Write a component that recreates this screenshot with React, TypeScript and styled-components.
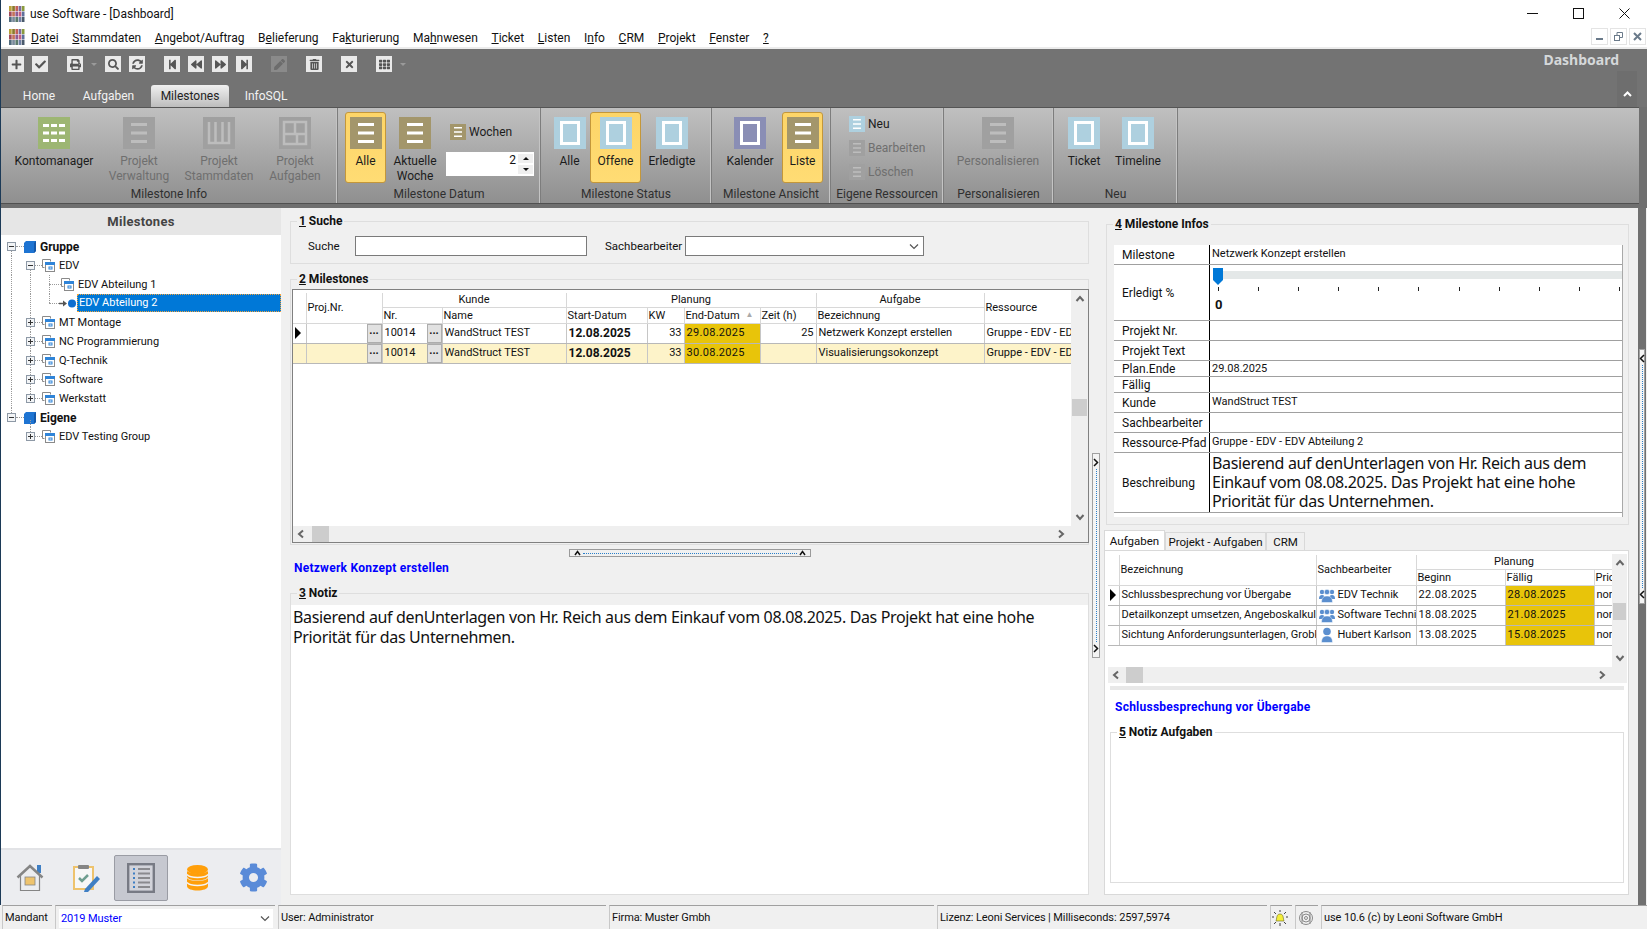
import React from 'react';
import styled, { createGlobalStyle } from 'styled-components';
import {
  FaBackward,
  FaCheck,
  FaCog,
  FaForward,
  FaPen,
  FaPlus,
  FaPrint,
  FaSearch,
  FaStepBackward,
  FaStepForward,
  FaSyncAlt,
  FaTh,
  FaTimes,
  FaTrashAlt,
} from 'react-icons/fa';

const GlobalStyle = createGlobalStyle`
  html, body {
    margin: 0;
    padding: 0;
    background: #f0f0f0;
    font-family: Roboto, "Noto Sans", sans-serif;
    font-size: 12px;
    color: #111;
    overflow: hidden;
  }
  * { box-sizing: border-box; }
`;

/* ---------- window frame ---------- */

const Page = styled.div`
  width: 1647px;
  height: 929px;
  display: flex;
  flex-direction: column;
  background: #f0f0f0;
`;

const Framed = styled.div`
  flex: 0 0 905px;
  display: flex;
  flex-direction: column;
  border-left: 1px solid #1c3a57;
`;

const TitleBar = styled.div`
  height: 26px;
  flex: none;
  display: flex;
  align-items: center;
  background: #fff;
  padding: 1px 0 0 8px;
`;

const AppLogo = styled.svg`
  width: 16px;
  height: 16px;
  margin-right: 5px;
  flex: none;
`;

const WindowButtons = styled.div`
  margin-left: auto;
  display: flex;
  gap: 35px;
  padding-right: 17px;
  align-items: center;
`;

const MenuBar = styled.div`
  height: 23px;
  flex: none;
  display: flex;
  align-items: center;
  background: #fff;
  padding-left: 8px;
  border-bottom: 2px solid #ececec;
`;

const MenuItem = styled.span`
  margin-right: 13.7px;
  padding-top: 3px;
  white-space: nowrap;
`;

const MdiButtons = styled.div`
  margin-left: auto;
  display: flex;
  gap: 2px;
  padding-right: 1px;
`;

const MdiButton = styled.div`
  width: 17px;
  height: 17px;
  border: 1px solid #e4e4e4;
  display: flex;
  align-items: center;
  justify-content: center;
`;

/* ---------- ribbon ---------- */

const RibbonHead = styled.div`
  height: 58px;
  flex: none;
  background: #737373;
  display: flex;
  flex-direction: column;
  position: relative;
`;

const Toolbar = styled.div`
  height: 30px;
  display: flex;
  align-items: center;
  gap: 19px;
  padding: 0 0 0 7px;
`;

const ToolGroup = styled.div`
  display: flex;
  align-items: center;
  gap: 8px;
`;

const ToolTile = styled.div<{ $off?: boolean }>`
  width: 16px;
  height: 16px;
  display: flex;
  align-items: center;
  justify-content: center;
  font-size: 11px;
  background: ${(p) => (p.$off ? '#8a8a8a' : '#e9e9e9')};
  color: ${(p) => (p.$off ? '#6c6c6c' : '#555')};
`;

const ToolCaret = styled.span`
  width: 0;
  height: 0;
  border-left: 3px solid transparent;
  border-right: 3px solid transparent;
  border-top: 3px solid #9a9a9a;
`;

const DashboardTitle = styled.div`
  position: absolute;
  right: 28px;
  top: 1px;
  font-family: "Noto Sans", sans-serif;
  font-size: 14px;
  font-weight: 700;
  color: #d5d8da;
`;

const CollapseTab = styled.div`
  position: absolute;
  right: 10px;
  bottom: 0;
  width: 20px;
  height: 36px;
  background: #6e6e6e;
  color: #fff;
  display: flex;
  align-items: center;
  justify-content: center;
  padding-top: 9px;
`;

const TabRow = styled.div`
  flex: 1;
  display: flex;
  align-items: flex-end;
  padding-left: 11px;
`;

const RibbonTab = styled.div<{ $active?: boolean; $w: number }>`
  width: ${(p) => p.$w}px;
  height: 22px;
  display: flex;
  align-items: center;
  justify-content: center;
  border-radius: 3px 3px 0 0;
  color: ${(p) => (p.$active ? '#222' : '#f2f2f2')};
  background: ${(p) => (p.$active ? 'linear-gradient(#f0f0f0, #bdbdbd)' : 'transparent')};
`;

const RibbonWrap = styled.div`
  flex: none;
  height: 101px;
  background: #6f6f6f;
  padding: 0 8px 4px 0;
`;

const Ribbon = styled.div`
  height: 97px;
  display: flex;
  background: linear-gradient(#c0c0c0, #8f8f8f);
  border-top: 1px solid #555;
  border-bottom: 1px solid #505050;
`;

const RibbonGroup = styled.div<{ $w: number }>`
  width: ${(p) => p.$w}px;
  flex: none;
  display: flex;
  flex-direction: column;
  border-right: 1px solid #7d7d7d;
  box-shadow: inset -1px 0 0 #c4c4c4;
`;

const GroupItems = styled.div<{ $pad: number; $gap?: number }>`
  height: 78px;
  display: flex;
  align-items: flex-start;
  padding: 4px 0 0 ${(p) => p.$pad}px;
  gap: ${(p) => p.$gap || 0}px;
`;

const GroupLabel = styled.div`
  flex: 1;
  display: flex;
  align-items: center;
  justify-content: center;
  color: #2f2f2f;
  padding-bottom: 1px;
  white-space: nowrap;
`;

const RibbonButton = styled.div<{ $w: number; $on?: boolean; $off?: boolean }>`
  width: ${(p) => p.$w}px;
  height: 71px;
  flex: none;
  display: flex;
  flex-direction: column;
  align-items: center;
  padding-top: 4px;
  border-radius: 3px;
  text-align: center;
  line-height: 15px;
  color: ${(p) => (p.$off ? '#6f6f6f' : '#1c1c1c')};
  border: 1px solid ${(p) => (p.$on ? '#c4973a' : 'transparent')};
  background: ${(p) => (p.$on ? 'linear-gradient(#fdd568, #ffdc74)' : 'transparent')};
`;

const ButtonText = styled.span`
  margin-top: 5px;
  white-space: nowrap;
`;

const WeekColumn = styled.div`
  display: flex;
  flex-direction: column;
  margin-left: 2px;
  padding-top: 12px;
`;

const SmallAction = styled.div<{ $off?: boolean }>`
  height: 16px;
  display: flex;
  align-items: center;
  gap: 3px;
  color: ${(p) => (p.$off ? '#6f6f6f' : '#1c1c1c')};
`;

const WeekAction = styled(SmallAction)`
  margin-left: 4px;
`;

const ActionStack = styled.div`
  display: flex;
  flex-direction: column;
  gap: 8px;
  padding-top: 4px;
`;

const Spinner = styled.div`
  width: 88px;
  height: 24px;
  margin-top: 12px;
  background: #fff;
  display: flex;
  justify-content: flex-end;
`;

const SpinValue = styled.span`
  line-height: 16px;
  margin-right: 2px;
`;

const SpinArrows = styled.div`
  width: 15px;
  display: flex;
  flex-direction: column;
  gap: 2px;
  padding: 2px 0;
  margin-right: 1px;
`;

const SpinArrow = styled.div<{ $down?: boolean }>`
  flex: 1;
  background: #efefef;
  display: flex;
  align-items: center;
  justify-content: center;
  &::after {
    content: '';
    border-left: 3px solid transparent;
    border-right: 3px solid transparent;
    ${(p) => (p.$down ? 'border-top: 3px solid #111;' : 'border-bottom: 3px solid #111;')}
  }
`;

const IconSvg = styled.svg<{ $size: number }>`
  width: ${(p) => p.$size}px;
  height: ${(p) => p.$size}px;
  flex: none;
  display: block;
`;

type Glyph = 'list' | 'frame' | 'grid' | 'columns' | 'tiles';

const RibbonIcon = ({ kind, color, ink = '#fff', size = 32 }: { kind: Glyph; color: string; ink?: string; size?: number }) => (
  <IconSvg $size={size} viewBox="0 0 32 32">
    <rect width="32" height="32" fill={color} />
    {kind === 'list' && (
      <g fill={ink}>
        <rect x="8" y="6" width="16" height="3" />
        <rect x="8" y="14.5" width="16" height="3" />
        <rect x="8" y="23" width="16" height="3" />
      </g>
    )}
    {kind === 'frame' && <rect x="7.5" y="5.5" width="17" height="21" fill="none" stroke={ink} strokeWidth="3" />}
    {kind === 'grid' && (
      <g fill={ink}>
        {[7, 14.5, 22].map((y) => [5, 13, 21].map((x) => <rect key={`${x}-${y}`} x={x} y={y} width="6" height="3" />))}
      </g>
    )}
    {kind === 'columns' && (
      <g fill="none" stroke={ink} strokeWidth="2.5">
        <path d="M6 5v21h20V5M12.5 5v21M19.5 5v21" />
      </g>
    )}
    {kind === 'tiles' && (
      <g fill="none" stroke={ink} strokeWidth="2.5">
        <rect x="5" y="5" width="22" height="22" />
        <path d="M5 17h22M16 5v12M18 17v10" />
      </g>
    )}
  </IconSvg>
);

const OFF = '#a0a0a0';
const OFF_INK = '#bdbdbd';
const TAN = '#a3966b';
const SKY = '#aed0df';

/* ---------- main area ---------- */

const Main = styled.div`
  flex: 1;
  display: flex;
  min-height: 0;
`;

const LeftPanel = styled.div`
  width: 280px;
  flex: none;
  display: flex;
  flex-direction: column;
  background: #fff;
`;

const PanelHeader = styled.div`
  height: 27px;
  flex: none;
  background: #e6e6e6;
  display: flex;
  align-items: center;
  justify-content: center;
  font-size: 13px;
  font-weight: 700;
  letter-spacing: 0.3px;
  color: #444;
`;

const Tree = styled.div`
  flex: 1;
  padding-top: 2px;
`;

const TreeRowBox = styled.div<{ $pad: number }>`
  height: 19px;
  position: relative;
  display: flex;
  align-items: center;
  padding-left: ${(p) => p.$pad}px;
  font-size: 11px;
`;

const Guide = styled.span<{ $x: number; $from: number; $to: number }>`
  position: absolute;
  left: ${(p) => p.$x}px;
  top: ${(p) => p.$from}px;
  bottom: ${(p) => 19 - p.$to}px;
  border-left: 1px dotted #9a9a9a;
`;

const Elbow = styled.span<{ $x: number; $w: number }>`
  position: absolute;
  left: ${(p) => p.$x}px;
  width: ${(p) => p.$w}px;
  top: 9px;
  border-top: 1px dotted #9a9a9a;
`;

const Expander = styled.span<{ $x: number }>`
  position: absolute;
  left: ${(p) => p.$x}px;
  top: 5px;
  width: 9px;
  height: 9px;
  border: 1px solid #8e99a6;
  background: #f2f4f6;
  z-index: 1;
  &::before {
    content: '';
    position: absolute;
    left: 1px;
    right: 1px;
    top: 3px;
    height: 1px;
    background: #333;
  }
`;

const ExpanderPlus = styled(Expander)`
  &::after {
    content: '';
    position: absolute;
    top: 1px;
    bottom: 1px;
    left: 3px;
    width: 1px;
    background: #333;
  }
`;

const TreeText = styled.span<{ $bold?: boolean }>`
  margin-left: 4px;
  white-space: nowrap;
  font-weight: ${(p) => (p.$bold ? 700 : 400)};
  font-size: ${(p) => (p.$bold ? 12 : 11)}px;
`;

const SelectedText = styled.span`
  position: absolute;
  left: 76px;
  right: 0;
  top: 0;
  height: 18px;
  background: #0078d7;
  color: #fff;
  outline: 1px dotted #f2a33c;
  outline-offset: -1px;
  padding-left: 2px;
  line-height: 18px;
`;

const Bullet = styled.svg`
  position: absolute;
  left: 58px;
  top: 4px;
  width: 18px;
  height: 11px;
`;

const NavBar = styled.div`
  height: 57px;
  flex: none;
  display: flex;
  align-items: center;
  background: #ecedf0;
  border-top: 2px solid #e2e3e6;
`;

const NavSlot = styled.div<{ $w: number; $on?: boolean }>`
  width: ${(p) => p.$w}px;
  height: 46px;
  flex: none;
  display: flex;
  align-items: center;
  justify-content: center;
  border-radius: 2px;
  color: #5a8bd8;
  font-size: 29px;
  background: ${(p) => (p.$on ? '#c6c8d0' : 'transparent')};
  border: 1px solid ${(p) => (p.$on ? '#9a9ca4' : 'transparent')};
`;

const CenterColumn = styled.div`
  width: 811px;
  flex: none;
  display: flex;
  flex-direction: column;
  padding: 6px 3px 10px 9px;
`;

const GroupBox = styled.fieldset<{ $h?: number; $top?: number }>`
  margin: ${(p) => p.$top || 0}px 0 0;
  padding: 0;
  min-width: 0;
  border: 1px solid #dedede;
  display: flex;
  flex-direction: column;
  ${(p) => (p.$h ? `height: ${p.$h}px; flex: none;` : 'flex: 1;')}
`;

const Legend = styled.legend`
  margin-left: 6px;
  padding: 0 2px;
  font-weight: 700;
  line-height: 14px;
`;

const InfoLegend = styled(Legend)`
  margin-left: -1px;
`;

const SearchRow = styled.div`
  display: flex;
  align-items: center;
  padding: 8px 0 0 17px;
  font-size: 11.5px;
`;

const FieldBox = styled.div<{ $w: number }>`
  width: ${(p) => p.$w}px;
  height: 20px;
  background: #fff;
  border: 1px solid #7a7a7a;
  display: flex;
  align-items: center;
  justify-content: flex-end;
  padding-right: 4px;
`;

const SearchLabel = styled.span<{ $w: number }>`
  width: ${(p) => p.$w}px;
  flex: none;
`;

const GridBox = styled.div`
  margin: 3px 0 0 1px;
  width: 797px;
  height: 254px;
  border: 1px solid #808080;
  display: flex;
  flex-direction: column;
`;

const GridTop = styled.div`
  flex: 1;
  display: flex;
  min-height: 0;
`;

const GridBody = styled.div`
  flex: 1;
  background: #fff;
  min-width: 0;
  overflow: hidden;
  padding-top: 3px;
`;

const Table = styled.table<{ $w: number }>`
  width: ${(p) => p.$w}px;
  table-layout: fixed;
  border-collapse: collapse;
  font-size: 11px;
`;

const HeadRow = styled.tr<{ $h: number }>`
  height: ${(p) => p.$h}px;
`;

const HeadCell = styled.td<{ $center?: boolean }>`
  position: relative;
  padding: 0 1px;
  background: #fff;
  border-right: 1px solid #d8d8d8;
  border-bottom: 1px solid #d8d8d8;
  text-align: ${(p) => (p.$center ? 'center' : 'left')};
  white-space: nowrap;
  overflow: hidden;
  line-height: 13px;
`;

const Row = styled.tr<{ $hot?: boolean }>`
  height: 20px;
  background: ${(p) => (p.$hot ? '#fdf3c9' : '#fff')};
`;

const Cell = styled.td<{ $right?: boolean; $bold?: boolean; $due?: boolean; $button?: boolean; $date?: boolean }>`
  padding: 0 ${(p) => (p.$button ? 0 : 2)}px;
  border-right: 1px solid #c6c6c6;
  border-bottom: 1px solid #b8b8b8;
  white-space: nowrap;
  overflow: hidden;
  line-height: 18px;
  text-align: ${(p) => (p.$right ? 'right' : 'left')};
  font-weight: ${(p) => (p.$bold ? 700 : 400)};
  font-size: ${(p) => (p.$bold ? 12 : 11)}px;
  letter-spacing: ${(p) => (p.$date ? 0.3 : 0)}px;
  background: ${(p) => (p.$due ? '#e8c40a' : 'transparent')};
`;

const CellInner = styled.div`
  display: flex;
  align-items: center;
  justify-content: space-between;
  padding-left: 2px;
`;

const Dots = styled.span`
  width: 15px;
  height: 19px;
  flex: none;
  background: #e1e1e1;
  border: 1px solid #adadad;
  font-weight: 700;
  line-height: 11px;
  text-align: center;
`;

const RowMark = styled.span`
  display: block;
  margin-left: 2px;
  width: 0;
  height: 0;
  border-top: 6px solid transparent;
  border-bottom: 6px solid transparent;
  border-left: 6px solid #000;
`;

const SortMark = styled.span`
  position: absolute;
  right: 6px;
  top: 0;
  font-size: 8px;
  color: #aaa;
`;

const VScroll = styled.div<{ $w: number; $thumbTop: number; $thumbH: number }>`
  width: ${(p) => p.$w}px;
  flex: none;
  display: flex;
  flex-direction: column;
  align-items: center;
  background: #efefef;
  padding: 4px 0;
  position: relative;
  &::after {
    content: '';
    position: absolute;
    left: 1px;
    right: 1px;
    top: ${(p) => p.$thumbTop}px;
    height: ${(p) => p.$thumbH}px;
    background: #cdcdcd;
  }
`;

const ScrollGap = styled.div`
  flex: 1;
`;

const HScroll = styled.div<{ $pad: number }>`
  height: 16px;
  flex: none;
  display: flex;
  align-items: center;
  background: #efefef;
  padding: 0 ${(p) => p.$pad}px 0 3px;
`;

const HThumb = styled.div<{ $left: number }>`
  width: 17px;
  height: 16px;
  margin-left: ${(p) => p.$left}px;
  background: #cdcdcd;
`;

const Arrow = styled.svg`
  width: 10px;
  height: 10px;
  flex: none;
  fill: none;
  stroke: #666;
  stroke-width: 2;
`;

const ChevUp = () => <Arrow viewBox="0 0 10 10"><path d="M1.5 7 5 3l3.5 4" /></Arrow>;
const ChevDown = () => <Arrow viewBox="0 0 10 10"><path d="M1.5 3 5 7l3.5-4" /></Arrow>;
const ChevLeft = () => <Arrow viewBox="0 0 10 10"><path d="M7 1.5 3 5l4 3.5" /></Arrow>;
const ChevRight = () => <Arrow viewBox="0 0 10 10"><path d="M3 1.5 7 5 3 8.5" /></Arrow>;

const GridSplitter = styled.div`
  align-self: center;
  width: 242px;
  height: 8px;
  margin-top: 4px;
  border: 1px solid #9a9a9a;
  display: flex;
  align-items: center;
  justify-content: space-between;
  padding: 0 4px;
  font-size: 0;
`;

const SplitterDots = styled.span`
  flex: 1;
  margin: 0 2px;
  border-top: 1px dotted #2a7fc9;
`;

const TinyCaret = styled.svg`
  width: 7px;
  height: 6px;
  flex: none;
  fill: none;
  stroke: #111;
  stroke-width: 1.5;
`;

const TinyCaretSide = styled(TinyCaret)`
  width: 6px;
  height: 9px;
`;

const Link = styled.div<{ $pad: number; $h: number }>`
  height: ${(p) => p.$h}px;
  flex: none;
  display: flex;
  align-items: center;
  padding-left: ${(p) => p.$pad}px;
  color: #0000ff;
  font-weight: 700;
  letter-spacing: 0.25px;
`;

const NoteText = styled.div`
  flex: 1;
  margin-top: 5px;
  background: #fff;
  padding: 3px 2px;
  font-family: "Noto Sans", sans-serif;
  font-size: 16px;
  line-height: 19.5px;
  letter-spacing: -0.35px;
`;

const VerticalSplitter = styled.div<{ $top: number; $h: number; $w: number }>`
  width: ${(p) => p.$w}px;
  height: ${(p) => p.$h}px;
  margin-top: ${(p) => p.$top}px;
  flex: none;
  background: #f4f4f4;
  border: 1px solid #a0a0a0;
  display: flex;
  flex-direction: column;
  align-items: center;
  justify-content: space-between;
  padding: 4px 0;
`;

const VDots = styled.span`
  flex: 1;
  margin: 2px 0;
  border-left: 1px dotted #2a7fc9;
`;

const SideStrip = styled.div`
  width: 8px;
  flex: none;
  background: #707070;
  display: flex;
  justify-content: center;
  align-items: flex-start;
`;

const RightColumn = styled.div`
  width: 538px;
  flex: none;
  display: flex;
  flex-direction: column;
  padding: 9px 9px 10px 4px;
`;

const InfoBox = styled(GroupBox)`
  margin-left: 2px;
  padding: 14px 5px 0 7px;
`;

const InfoTable = styled.div`
  background: #fff;
  padding-bottom: 4px;
  border-right: 1px solid #a8a8a8;
`;

const InfoRow = styled.div<{ $h: number }>`
  height: ${(p) => p.$h}px;
  display: flex;
  border-bottom: 1px solid #a0a0a0;
`;

const InfoLabel = styled.div`
  width: 96px;
  flex: none;
  padding: 0 0 0 8px;
  display: flex;
  align-items: center;
  border-right: 1px solid #000;
`;

const InfoValue = styled.div<{ $top?: boolean }>`
  flex: 1;
  display: flex;
  padding: ${(p) => (p.$top ? 2 : 0)}px 2px 0;
  align-items: ${(p) => (p.$top ? 'flex-start' : 'center')};
  font-size: 11px;
  min-width: 0;
`;

const BigValue = styled(InfoValue)`
  font-family: "Noto Sans", sans-serif;
  font-size: 16px;
  line-height: 19px;
  letter-spacing: -0.35px;
  padding-top: 1px;
`;

const SliderBox = styled.div`
  flex: 1;
  padding: 6px 0 0 3px;
  display: flex;
  flex-direction: column;
`;

const SliderTrack = styled.div`
  height: 8px;
  background: #e4e8e8;
  position: relative;
`;

const SliderThumb = styled.svg`
  position: absolute;
  left: 0;
  top: -3px;
  width: 10px;
  height: 17px;
`;

const Ticks = styled.div`
  display: flex;
  justify-content: space-between;
  padding: 0 2px 0 5px;
  margin-top: 8px;
`;

const Tick = styled.span`
  width: 1px;
  height: 4px;
  background: #222;
`;

const SliderValue = styled.div`
  font-size: 13px;
  font-weight: 700;
  line-height: 16px;
  margin: 6px 0 0 2px;
`;

const TabStrip = styled.div`
  margin-top: 5px;
  display: flex;
  align-items: flex-end;
  height: 20px;
  flex: none;
`;

const PageTab = styled.div<{ $w: number; $active?: boolean }>`
  width: ${(p) => p.$w}px;
  height: ${(p) => (p.$active ? 20 : 18)}px;
  display: flex;
  align-items: center;
  justify-content: center;
  white-space: nowrap;
  font-size: 11.5px;
  background: ${(p) => (p.$active ? '#fff' : '#f0f0f0')};
  border: 1px solid #d9d9d9;
  border-bottom: 0;
`;

const TabPage = styled.div`
  flex: 1;
  background: #fff;
  border: 1px solid #d9d9d9;
  display: flex;
  flex-direction: column;
  padding: 3px 1px 5px 3px;
  min-height: 0;
`;

const TaskTop = styled.div`
  height: 113px;
  flex: none;
  display: flex;
`;

const TaskBody = styled.div`
  flex: 1;
  overflow: hidden;
  min-width: 0;
  padding-top: 1px;
`;

const PaleBar = styled.div`
  height: 4px;
  margin: 3px 3px 0 2px;
  background: #e8e8e8;
  flex: none;
`;

const NoteBox = styled(GroupBox)`
  margin: 1px 3px 6px 2px;
`;

const WhoCell = styled.span`
  display: flex;
  align-items: center;
  gap: 3px;
  svg {
    flex: none;
  }
`;

/* ---------- status bar ---------- */

const StatusBar = styled.div`
  flex: 1;
  display: flex;
  gap: 3px;
  padding-left: 2px;
  font-size: 11px;
  letter-spacing: -0.1px;
`;

const StatusCell = styled.div<{ $w?: number }>`
  ${(p) => (p.$w ? `width: ${p.$w}px; flex: none;` : 'flex: 1;')}
  display: flex;
  align-items: center;
  padding-left: 2px;
  border-top: 1px solid #a0a0a0;
  border-left: 1px solid #c8c8c8;
  white-space: nowrap;
  overflow: hidden;
`;

const StatusGlyph = styled(StatusCell)`
  padding-left: 0;
`;

const MandantCombo = styled.div`
  flex: 1;
  height: 19px;
  margin: 1px 2px 0 1px;
  background: #fff;
  display: flex;
  align-items: center;
  justify-content: space-between;
  padding: 0 3px 0 2px;
  color: #0000ff;
`;

const Combo = () => (
  <svg width="10" height="7" viewBox="0 0 10 7" fill="none" stroke="#555" strokeWidth="1.2">
    <path d="M1 1.5 5 5.5l4-4" />
  </svg>
);

const TinyUp = () => <TinyCaret viewBox="0 0 7 6"><path d="M1 5 3.5 1.5 6 5" /></TinyCaret>;
const TinyLeft = () => <TinyCaretSide viewBox="0 0 6 9"><path d="M5 1 1.5 4.5 5 8" /></TinyCaretSide>;
const TinyRight = () => <TinyCaretSide viewBox="0 0 6 9"><path d="M1 1 4.5 4.5 1 8" /></TinyCaretSide>;

/* ---------- drawings ---------- */

const Logo = () => (
  <AppLogo viewBox="0 0 16 16">
    {[0, 1, 2, 3, 4].map((i) => (
      <g key={i}>
        <rect x={i * 3.2} y="0" width="2.7" height="5" fill={['#b9a23a', '#8a7a2c', '#c45f56', '#7a6a9c', '#8a9a3c'][i]} />
        <rect x={i * 3.2} y="5.5" width="2.7" height="5" fill={['#a04a5a', '#c4725a', '#8c5a94', '#c45f80', '#5f6f9c'][i]} />
        <rect x={i * 3.2} y="11" width="2.7" height="5" fill={['#4f6a7c', '#7a8a9c', '#5a7a6c', '#6f7fa4', '#4a5a6c'][i]} />
      </g>
    ))}
  </AppLogo>
);

const Cube = () => (
  <svg width="12" height="12" viewBox="0 0 12 12">
    <path d="M2 0h10v10l-2 2H0V2z" fill="#1e74d2" />
    <path d="M10 2v10l2-2V0z" fill="#1558a8" />
  </svg>
);

const Dept = () => (
  <svg width="13" height="13" viewBox="0 0 13 13">
    <path d="M.5.5h8v2M.5.5v8h2" fill="none" stroke="#8a8a8a" />
    <rect x="3.5" y="3.5" width="9" height="9" fill="#fff" stroke="#8a8a8a" />
    <rect x="3" y="3" width="10" height="3" fill="#2f84d8" />
    <rect x="7" y="8" width="3" height="2" fill="none" stroke="#2f84d8" />
  </svg>
);

const People = ({ many }: { many?: boolean }) => (
  <svg width="16" height="16" viewBox="0 0 16 16" fill="#5b8fcf">
    {many && <circle cx="3" cy="5" r="2.2" />}
    {many && <circle cx="13" cy="5" r="2.2" />}
    {many && <path d="M0 12c0-3 1-4 3-4s3 1 3 4zM10 12c0-3 1-4 3-4s3 1 3 4z" />}
    <circle cx="8" cy={many ? 5 : 4.5} r={many ? 2.8 : 3.8} stroke={many ? '#fff' : 'none'} strokeWidth="0.7" />
    <path d="M2.5 15.5c0-4.5 2-6.5 5.5-6.5s5.5 2 5.5 6.5z" stroke="#fff" strokeWidth="0.5" />
  </svg>
);

const HomeIcon = () => (
  <svg width="28" height="28" viewBox="0 0 28 28">
    <rect x="21" y="1" width="4" height="8" fill="#3f7fc4" />
    <path d="M1.5 13.5 14 2l12.5 11.5" fill="none" stroke="#858585" strokeWidth="2.5" />
    <path d="M4.5 12v14.5h19V12" fill="none" stroke="#858585" strokeWidth="1.2" />
    <rect x="9" y="13" width="10" height="8" fill="#eec36d" stroke="#858585" strokeWidth="0.8" />
  </svg>
);

const TaskIcon = () => (
  <svg width="28" height="30" viewBox="0 0 28 30">
    <rect x="1" y="4" width="19" height="22" fill="#f7f7f7" stroke="#eec36d" strokeWidth="2" />
    <rect x="5" y="2" width="11" height="4" rx="1" fill="#858585" />
    <path d="M6 15l3 3 6-6" fill="none" stroke="#6f9e90" strokeWidth="2.5" />
    <path d="M12 26 24 13l3 3-12 13h-4z" fill="#3f7fc4" />
  </svg>
);

const ListIcon = () => (
  <svg width="28" height="30" viewBox="0 0 28 30">
    <rect x="1.2" y="1.2" width="25.6" height="27.6" fill="#d2d3da" stroke="#777a84" strokeWidth="2.4" />
    {[6, 10.5, 15, 19.5, 24].map((y) => (
      <g key={y}>
        <rect x="6" y={y - 1} width="2" height="2" fill="#3f7fc4" />
        <rect x="11" y={y - 1} width="12" height="2" fill="#8a8a8f" />
      </g>
    ))}
  </svg>
);

const DbIcon = () => (
  <svg width="21" height="26" viewBox="0 0 21 26" fill="#ff9f0a">
    <ellipse cx="10.5" cy="4.5" rx="10.5" ry="4.5" />
    <path d="M0 6c2 3 19 3 21 0v5c0 6-21 6-21 0z" />
    <path d="M0 13c2 4 19 4 21 0v8c0 6-21 6-21 0z" />
    <path d="M0 17.5c3 4 18 4 21 0" fill="none" stroke="#f4f4f6" strokeWidth="1.4" />
    <path d="M0 9.5c3 4 18 4 21 0" fill="none" stroke="#f4f4f6" strokeWidth="1.4" />
  </svg>
);

const Bell = () => (
  <svg width="18" height="18" viewBox="0 0 18 18">
    <path d="M5 12c1-2 0-7 4-7s3 5 4 7z" fill="#f4ee3a" stroke="#6a6a20" strokeWidth="0.6" />
    <path d="M9 1v2M3 3l2 2M15 3l-2 2M1 8h2M15 8h2M3 15l2-2M15 15l-2-2M9 14v3" stroke="#111" strokeWidth="0.8" />
  </svg>
);

const Ear = () => (
  <svg width="16" height="18" viewBox="0 0 16 18" fill="none" stroke="#8a8a8a" strokeWidth="1">
    <circle cx="8" cy="9" r="6.5" />
    <circle cx="8" cy="9" r="4" />
    <circle cx="8" cy="9" r="1.5" />
    <path d="M4 3v12M12 3v12" />
  </svg>
);

/* ---------- data ---------- */

const menus = ['Datei', 'Stammdaten', 'Angebot/Auftrag', 'Belieferung', 'Fakturierung', 'Mahnwesen', 'Ticket', 'Listen', 'Info', 'CRM', 'Projekt', 'Fenster', '?'];
const hotkey: Record<string, number> = { Belieferung: 1, Fakturierung: 2, Mahnwesen: 2, Info: 1 };

type TreeEntry = {
  label: string;
  x: number;
  bold?: boolean;
  open?: boolean;
  closed?: boolean;
  expander?: number;
  guides: [number, number, number][];
  elbow?: [number, number];
};

const treeRows: TreeEntry[] = [
  { label: 'Gruppe', x: 23, bold: true, open: true, expander: 6, guides: [[10, 10, 19]], elbow: [15, 8] },
  { label: 'EDV', x: 41, open: true, expander: 25, guides: [[10, 0, 19], [29, 10, 19]], elbow: [34, 7] },
  { label: 'EDV Abteilung 1', x: 60, guides: [[10, 0, 19], [29, 0, 19], [48, 0, 19]], elbow: [48, 12] },
  { label: 'EDV Abteilung 2', x: 0, guides: [[10, 0, 19], [29, 0, 19], [48, 0, 9]], elbow: [48, 10] },
  { label: 'MT Montage', x: 41, closed: true, expander: 25, guides: [[10, 0, 19], [29, 0, 19]], elbow: [34, 7] },
  { label: 'NC Programmierung', x: 41, closed: true, expander: 25, guides: [[10, 0, 19], [29, 0, 19]], elbow: [34, 7] },
  { label: 'Q-Technik', x: 41, closed: true, expander: 25, guides: [[10, 0, 19], [29, 0, 19]], elbow: [34, 7] },
  { label: 'Software', x: 41, closed: true, expander: 25, guides: [[10, 0, 19], [29, 0, 19]], elbow: [34, 7] },
  { label: 'Werkstatt', x: 41, closed: true, expander: 25, guides: [[10, 0, 19], [29, 0, 9]], elbow: [34, 7] },
  { label: 'Eigene', x: 23, bold: true, open: true, expander: 6, guides: [[10, 0, 9], [29, 12, 19]], elbow: [15, 8] },
  { label: 'EDV Testing Group', x: 41, closed: true, expander: 25, guides: [[29, 0, 9]], elbow: [34, 7] },
];

const TreeRow = ({ row }: { row: TreeEntry }) => {
  const selected = row.x === 0;
  return (
    <TreeRowBox $pad={row.x}>
      {row.guides.map(([x, from, to]) => (
        <Guide key={x} $x={x} $from={from} $to={to} />
      ))}
      {row.elbow && <Elbow $x={row.elbow[0]} $w={row.elbow[1]} />}
      {row.open && <Expander $x={row.expander || 0} />}
      {row.closed && <ExpanderPlus $x={row.expander || 0} />}
      {selected ? (
        <>
          <Bullet viewBox="0 0 18 11">
            <path d="M0 5.500h5" stroke="#555" strokeWidth="1.5" />
            <path d="M4 2.500 8 5.500 4 8.500z" fill="#555" />
            <circle cx="13" cy="5.500" r="4" fill="#0f6fd0" />
          </Bullet>
          <SelectedText>{row.label}</SelectedText>
        </>
      ) : (
        <>
          {row.bold ? <Cube /> : <Dept />}
          <TreeText $bold={row.bold}>{row.label}</TreeText>
        </>
      )}
    </TreeRowBox>
  );
};

const Menu = ({ label }: { label: string }) => {
  const i = hotkey[label] || 0;
  return (
    <MenuItem>
      {label.slice(0, i)}
      <u>{label[i]}</u>
      {label.slice(i + 1)}
    </MenuItem>
  );
};

const tasks = [
  { name: 'Schlussbesprechung vor Übergabe', who: 'EDV Technik', many: true, begin: '22.08.2025', due: '28.08.2025', mark: true },
  { name: 'Detailkonzept umsetzen, Angeboskalkulation', who: 'Software Technik', many: true, begin: '18.08.2025', due: '21.08.2025' },
  { name: 'Sichtung Anforderungsunterlagen, Grobkonzept', who: 'Hubert Karlson', begin: '13.08.2025', due: '15.08.2025' },
];

const milestones = [
  { end: '29.08.2025', hours: '25', title: 'Netzwerk Konzept erstellen', mark: true },
  { end: '30.08.2025', hours: '', title: 'Visualisierungsokonzept', hot: true },
];

export default function App() {
  return (
    <Page>
      <GlobalStyle />
      <Framed>
        <TitleBar>
          <Logo />
          use Software - [Dashboard]
          <WindowButtons>
            <svg width="11" height="11" viewBox="0 0 11 11" stroke="#111"><path d="M0 5.500h11" /></svg>
            <svg width="11" height="11" viewBox="0 0 11 11" stroke="#111" fill="none"><rect x=".5" y=".5" width="10" height="10" /></svg>
            <svg width="11" height="11" viewBox="0 0 11 11" stroke="#111"><path d="M.5.5l10 10M10.500.5l-10 10" /></svg>
          </WindowButtons>
        </TitleBar>
        <MenuBar>
          <Logo />
          <span style={{ width: 1 }} />
          {menus.map((m) => (
            <Menu key={m} label={m} />
          ))}
          <MdiButtons>
            <MdiButton>
              <svg width="9" height="9" viewBox="0 0 9 9" fill="#6a7a8a"><rect x="1" y="6" width="7" height="2" /></svg>
            </MdiButton>
            <MdiButton>
              <svg width="9" height="9" viewBox="0 0 9 9" fill="none" stroke="#6a7a8a"><rect x=".5" y="3.500" width="5" height="5" /><path d="M3 3V.5h5.500v5H6" /></svg>
            </MdiButton>
            <MdiButton>
              <svg width="9" height="9" viewBox="0 0 9 9" stroke="#6a7a8a" strokeWidth="2"><path d="M1 1l7 7M8 1 1 8" /></svg>
            </MdiButton>
          </MdiButtons>
        </MenuBar>

        <RibbonHead>
          <Toolbar>
            <ToolGroup>
              <ToolTile><FaPlus /></ToolTile>
              <ToolTile><FaCheck /></ToolTile>
            </ToolGroup>
            <ToolGroup>
              <ToolTile><FaPrint /></ToolTile>
              <ToolCaret />
              <ToolTile><FaSearch /></ToolTile>
              <ToolTile><FaSyncAlt /></ToolTile>
            </ToolGroup>
            <ToolGroup>
              <ToolTile><FaStepBackward /></ToolTile>
              <ToolTile><FaBackward /></ToolTile>
              <ToolTile><FaForward /></ToolTile>
              <ToolTile><FaStepForward /></ToolTile>
            </ToolGroup>
            <ToolTile $off><FaPen /></ToolTile>
            <ToolTile><FaTrashAlt /></ToolTile>
            <ToolTile><FaTimes /></ToolTile>
            <ToolGroup>
              <ToolTile><FaTh /></ToolTile>
              <ToolCaret />
            </ToolGroup>
          </Toolbar>
          <DashboardTitle>Dashboard</DashboardTitle>
          <CollapseTab>
            <svg width="9" height="6" viewBox="0 0 9 6" fill="none" stroke="#fff" strokeWidth="2"><path d="M1 5l3.500-3.500L8 5" /></svg>
          </CollapseTab>
          <TabRow>
            <RibbonTab $w={54}>Home</RibbonTab>
            <RibbonTab $w={85}>Aufgaben</RibbonTab>
            <RibbonTab $w={78} $active>Milestones</RibbonTab>
            <RibbonTab $w={74}>InfoSQL</RibbonTab>
          </TabRow>
        </RibbonHead>

        <RibbonWrap>
          <Ribbon>
            <RibbonGroup $w={337}>
              <GroupItems $pad={9}>
                <RibbonButton $w={88}>
                  <RibbonIcon kind="grid" color="#9db673" />
                  <ButtonText>Kontomanager</ButtonText>
                </RibbonButton>
                <RibbonButton $w={82} $off>
                  <RibbonIcon kind="list" color={OFF} ink={OFF_INK} />
                  <ButtonText>Projekt<br />Verwaltung</ButtonText>
                </RibbonButton>
                <RibbonButton $w={78} $off>
                  <RibbonIcon kind="columns" color={OFF} ink={OFF_INK} />
                  <ButtonText>Projekt<br />Stammdaten</ButtonText>
                </RibbonButton>
                <RibbonButton $w={74} $off>
                  <RibbonIcon kind="tiles" color={OFF} ink={OFF_INK} />
                  <ButtonText>Projekt<br />Aufgaben</ButtonText>
                </RibbonButton>
              </GroupItems>
              <GroupLabel>Milestone Info</GroupLabel>
            </RibbonGroup>

            <RibbonGroup $w={203}>
              <GroupItems $pad={7} $gap={4}>
                <RibbonButton $w={41} $on>
                  <RibbonIcon kind="list" color={TAN} />
                  <ButtonText>Alle</ButtonText>
                </RibbonButton>
                <RibbonButton $w={50}>
                  <RibbonIcon kind="list" color={TAN} />
                  <ButtonText>Aktuelle<br />Woche</ButtonText>
                </RibbonButton>
                <WeekColumn>
                  <WeekAction>
                    <RibbonIcon kind="list" color={TAN} size={16} />
                    Wochen
                  </WeekAction>
                  <Spinner>
                    <SpinValue>2</SpinValue>
                    <SpinArrows>
                      <SpinArrow />
                      <SpinArrow $down />
                    </SpinArrows>
                  </Spinner>
                </WeekColumn>
              </GroupItems>
              <GroupLabel>Milestone Datum</GroupLabel>
            </RibbonGroup>

            <RibbonGroup $w={171}>
              <GroupItems $pad={8}>
                <RibbonButton $w={41}>
                  <RibbonIcon kind="frame" color={SKY} />
                  <ButtonText>Alle</ButtonText>
                </RibbonButton>
                <RibbonButton $w={51} $on>
                  <RibbonIcon kind="frame" color={SKY} />
                  <ButtonText>Offene</ButtonText>
                </RibbonButton>
                <RibbonButton $w={62}>
                  <RibbonIcon kind="frame" color={SKY} />
                  <ButtonText>Erledigte</ButtonText>
                </RibbonButton>
              </GroupItems>
              <GroupLabel>Milestone Status</GroupLabel>
            </RibbonGroup>

            <RibbonGroup $w={119}>
              <GroupItems $pad={10} $gap={4}>
                <RibbonButton $w={56}>
                  <RibbonIcon kind="frame" color="#8a8eb5" />
                  <ButtonText>Kalender</ButtonText>
                </RibbonButton>
                <RibbonButton $w={41} $on>
                  <RibbonIcon kind="list" color={TAN} />
                  <ButtonText>Liste</ButtonText>
                </RibbonButton>
              </GroupItems>
              <GroupLabel>Milestone Ansicht</GroupLabel>
            </RibbonGroup>

            <RibbonGroup $w={113}>
              <GroupItems $pad={18}>
                <ActionStack>
                  <SmallAction>
                    <RibbonIcon kind="list" color={SKY} size={16} />
                    Neu
                  </SmallAction>
                  <SmallAction $off>
                    <RibbonIcon kind="list" color={OFF} ink={OFF_INK} size={16} />
                    Bearbeiten
                  </SmallAction>
                  <SmallAction $off>
                    <RibbonIcon kind="list" color={OFF} ink={OFF_INK} size={16} />
                    Löschen
                  </SmallAction>
                </ActionStack>
              </GroupItems>
              <GroupLabel>Eigene Ressourcen</GroupLabel>
            </RibbonGroup>

            <RibbonGroup $w={110}>
              <GroupItems $pad={0}>
                <RibbonButton $w={108} $off>
                  <RibbonIcon kind="list" color={OFF} ink={OFF_INK} />
                  <ButtonText>Personalisieren</ButtonText>
                </RibbonButton>
              </GroupItems>
              <GroupLabel>Personalisieren</GroupLabel>
            </RibbonGroup>

            <RibbonGroup $w={124}>
              <GroupItems $pad={6} $gap={2}>
                <RibbonButton $w={48}>
                  <RibbonIcon kind="frame" color={SKY} />
                  <ButtonText>Ticket</ButtonText>
                </RibbonButton>
                <RibbonButton $w={56}>
                  <RibbonIcon kind="frame" color={SKY} />
                  <ButtonText>Timeline</ButtonText>
                </RibbonButton>
              </GroupItems>
              <GroupLabel>Neu</GroupLabel>
            </RibbonGroup>
          </Ribbon>
        </RibbonWrap>

        <Main>
          <LeftPanel>
            <PanelHeader>Milestones</PanelHeader>
            <Tree>
              {treeRows.map((row) => (
                <TreeRow key={row.label} row={row} />
              ))}
            </Tree>
            <NavBar>
              <NavSlot $w={58}><HomeIcon /></NavSlot>
              <NavSlot $w={55}><TaskIcon /></NavSlot>
              <NavSlot $w={54} $on><ListIcon /></NavSlot>
              <NavSlot $w={58}><DbIcon /></NavSlot>
              <NavSlot $w={54}><FaCog /></NavSlot>
            </NavBar>
          </LeftPanel>

          <CenterColumn>
            <GroupBox $h={50}>
              <Legend><u>1</u> Suche</Legend>
              <SearchRow>
                <SearchLabel $w={47}>Suche</SearchLabel>
                <FieldBox $w={232} />
                <SearchLabel $w={18} />
                <SearchLabel $w={80}>Sachbearbeiter</SearchLabel>
                <FieldBox $w={239}>
                  <Combo />
                </FieldBox>
              </SearchRow>
            </GroupBox>

            <GroupBox $h={273} $top={8}>
              <Legend><u>2</u> Milestones</Legend>
              <GridBox>
                <GridTop>
                  <GridBody>
                    <Table $w={778}>
                      <colgroup>
                        <col width={13} />
                        <col width={76} />
                        <col width={60} />
                        <col width={124} />
                        <col width={81} />
                        <col width={37} />
                        <col width={76} />
                        <col width={56} />
                        <col width={168} />
                        <col width={87} />
                      </colgroup>
                      <tbody>
                        <HeadRow $h={14}>
                          <HeadCell rowSpan={2} />
                          <HeadCell rowSpan={2}>Proj.Nr.</HeadCell>
                          <HeadCell colSpan={2} $center>Kunde</HeadCell>
                          <HeadCell colSpan={4} $center>Planung</HeadCell>
                          <HeadCell $center>Aufgabe</HeadCell>
                          <HeadCell rowSpan={2}>Ressource</HeadCell>
                        </HeadRow>
                        <HeadRow $h={16}>
                          <HeadCell>Nr.</HeadCell>
                          <HeadCell>Name</HeadCell>
                          <HeadCell>Start-Datum</HeadCell>
                          <HeadCell>KW</HeadCell>
                          <HeadCell>End-Datum<SortMark>▲</SortMark></HeadCell>
                          <HeadCell>Zeit (h)</HeadCell>
                          <HeadCell>Bezeichnung</HeadCell>
                        </HeadRow>
                        {milestones.map((m) => (
                          <Row key={m.end} $hot={m.hot}>
                            <Cell $button>{m.mark && <RowMark />}</Cell>
                            <Cell $button><CellInner><span /><Dots>...</Dots></CellInner></Cell>
                            <Cell $button><CellInner>10014<Dots>...</Dots></CellInner></Cell>
                            <Cell>WandStruct TEST</Cell>
                            <Cell $bold>12.08.2025</Cell>
                            <Cell $right>33</Cell>
                            <Cell $due $date>{m.end}</Cell>
                            <Cell $right>{m.hours}</Cell>
                            <Cell>{m.title}</Cell>
                            <Cell>Gruppe - EDV - EDV Abteilung 2</Cell>
                          </Row>
                        ))}
                      </tbody>
                    </Table>
                  </GridBody>
                  <VScroll $w={17} $thumbTop={109} $thumbH={17}>
                    <ChevUp />
                    <ScrollGap />
                    <ChevDown />
                  </VScroll>
                </GridTop>
                <HScroll $pad={22}>
                  <ChevLeft />
                  <HThumb $left={6} />
                  <ScrollGap />
                  <ChevRight />
                </HScroll>
              </GridBox>
            </GroupBox>

            <GridSplitter>
              <TinyUp />
              <SplitterDots />
              <TinyUp />
            </GridSplitter>
            <Link $pad={4} $h={22}>Netzwerk Konzept erstellen</Link>

            <GroupBox $top={7}>
              <Legend><u>3</u> Notiz</Legend>
              <NoteText>
                Basierend auf denUnterlagen von Hr. Reich aus dem Einkauf vom 08.08.2025. Das Projekt hat eine hohe
                <br />
                Priorität für das Unternehmen.
              </NoteText>
            </GroupBox>
          </CenterColumn>

          <VerticalSplitter $top={245} $h={205} $w={8}>
            <TinyRight />
            <VDots />
            <TinyRight />
          </VerticalSplitter>

          <RightColumn>
            <InfoBox $h={308}>
              <InfoLegend><u>4</u> Milestone Infos</InfoLegend>
              <InfoTable>
                <InfoRow $h={20}>
                  <InfoLabel>Milestone</InfoLabel>
                  <InfoValue $top>Netzwerk Konzept erstellen</InfoValue>
                </InfoRow>
                <InfoRow $h={56}>
                  <InfoLabel>Erledigt %</InfoLabel>
                  <SliderBox>
                    <SliderTrack>
                      <SliderThumb viewBox="0 0 10 17">
                        <path d="M0 0h10v12l-5 5-5-5z" fill="#0078d7" />
                      </SliderThumb>
                    </SliderTrack>
                    <Ticks>
                      {Array.from({ length: 11 }, (_, i) => (
                        <Tick key={i} />
                      ))}
                    </Ticks>
                    <SliderValue>0</SliderValue>
                  </SliderBox>
                </InfoRow>
                <InfoRow $h={20}>
                  <InfoLabel>Projekt Nr.</InfoLabel>
                  <InfoValue />
                </InfoRow>
                <InfoRow $h={20}>
                  <InfoLabel>Projekt Text</InfoLabel>
                  <InfoValue />
                </InfoRow>
                <InfoRow $h={16}>
                  <InfoLabel>Plan.Ende</InfoLabel>
                  <InfoValue>29.08.2025</InfoValue>
                </InfoRow>
                <InfoRow $h={16}>
                  <InfoLabel>Fällig</InfoLabel>
                  <InfoValue />
                </InfoRow>
                <InfoRow $h={20}>
                  <InfoLabel>Kunde</InfoLabel>
                  <InfoValue $top>WandStruct TEST</InfoValue>
                </InfoRow>
                <InfoRow $h={20}>
                  <InfoLabel>Sachbearbeiter</InfoLabel>
                  <InfoValue />
                </InfoRow>
                <InfoRow $h={20}>
                  <InfoLabel>Ressource-Pfad</InfoLabel>
                  <InfoValue $top>Gruppe - EDV - EDV Abteilung 2</InfoValue>
                </InfoRow>
                <InfoRow $h={60}>
                  <InfoLabel>Beschreibung</InfoLabel>
                  <BigValue $top>
                    <span>
                      Basierend auf denUnterlagen von Hr. Reich aus dem
                      <br />
                      Einkauf vom 08.08.2025. Das Projekt hat eine hohe
                      <br />
                      Priorität für das Unternehmen.
                    </span>
                  </BigValue>
                </InfoRow>
              </InfoTable>
            </InfoBox>

            <TabStrip>
              <PageTab $w={61} $active>Aufgaben</PageTab>
              <PageTab $w={101}>Projekt - Aufgaben</PageTab>
              <PageTab $w={39}>CRM</PageTab>
            </TabStrip>
            <TabPage>
              <TaskTop>
                <TaskBody>
                  <Table $w={504}>
                    <colgroup>
                      <col width={11} />
                      <col width={197} />
                      <col width={100} />
                      <col width={89} />
                      <col width={89} />
                      <col width={18} />
                    </colgroup>
                    <tbody>
                      <HeadRow $h={14}>
                        <HeadCell rowSpan={2} />
                        <HeadCell rowSpan={2}>Bezeichnung</HeadCell>
                        <HeadCell rowSpan={2}>Sachbearbeiter</HeadCell>
                        <HeadCell colSpan={3} $center>Planung</HeadCell>
                      </HeadRow>
                      <HeadRow $h={16}>
                        <HeadCell>Beginn</HeadCell>
                        <HeadCell>Fällig</HeadCell>
                        <HeadCell>Priorität</HeadCell>
                      </HeadRow>
                      {tasks.map((t) => (
                        <Row key={t.name}>
                          <Cell $button>{t.mark && <RowMark />}</Cell>
                          <Cell>{t.name}</Cell>
                          <Cell><WhoCell><People many={t.many} />{t.who}</WhoCell></Cell>
                          <Cell $date>{t.begin}</Cell>
                          <Cell $due $date>{t.due}</Cell>
                          <Cell>normal</Cell>
                        </Row>
                      ))}
                    </tbody>
                  </Table>
                </TaskBody>
                <VScroll $w={15} $thumbTop={49} $thumbH={17}>
                  <ChevUp />
                  <ScrollGap />
                  <ChevDown />
                </VScroll>
              </TaskTop>
              <HScroll $pad={20}>
                <ChevLeft />
                <HThumb $left={5} />
                <ScrollGap />
                <ChevRight />
              </HScroll>
              <PaleBar />
              <Link $pad={7} $h={34}>Schlussbesprechung vor Übergabe</Link>
              <NoteBox>
                <Legend><u>5</u> Notiz Aufgaben</Legend>
              </NoteBox>
            </TabPage>
          </RightColumn>

          <SideStrip>
            <VerticalSplitter $top={141} $h={255} $w={6}>
              <TinyLeft />
              <VDots />
              <TinyLeft />
            </VerticalSplitter>
          </SideStrip>
        </Main>
      </Framed>

      <StatusBar>
        <StatusCell $w={50}>Mandant</StatusCell>
        <StatusCell $w={220}>
          <MandantCombo>
            2019 Muster
            <Combo />
          </MandantCombo>
        </StatusCell>
        <StatusCell $w={328}>User: Administrator</StatusCell>
        <StatusCell $w={325}>Firma: Muster Gmbh</StatusCell>
        <StatusCell $w={330}>Lizenz: Leoni Services | Milliseconds: 2597,5974</StatusCell>
        <StatusGlyph $w={22}><Bell /></StatusGlyph>
        <StatusCell $w={23}><Ear /></StatusCell>
        <StatusCell>use 10.6 (c) by Leoni Software GmbH</StatusCell>
      </StatusBar>
    </Page>
  );
}
